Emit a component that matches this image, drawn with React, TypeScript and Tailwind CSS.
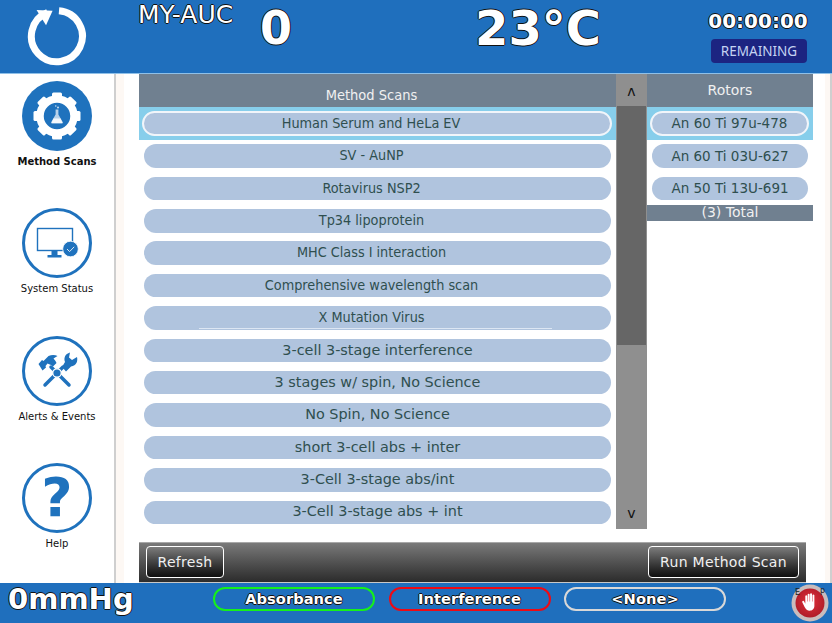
import React from 'react';

// the first rows of the list use a narrower face, and sit a little left of centre
const methods = [
  { name: 'Human Serum and HeLa EV', narrow: true },
  { name: 'SV - AuNP', narrow: true },
  { name: 'Rotavirus NSP2', narrow: true },
  { name: 'Tp34 lipoprotein', narrow: true },
  { name: 'MHC Class I interaction', narrow: true },
  { name: 'Comprehensive wavelength scan', narrow: true },
  { name: 'X Mutation Virus', narrow: true },
  { name: '3-cell 3-stage interference' },
  { name: '3 stages w/ spin, No Science' },
  { name: 'No Spin, No Science' },
  { name: 'short 3-cell abs + inter' },
  { name: '3-Cell 3-stage abs/int' },
  { name: '3-Cell 3-stage abs + int' },
];

const rotors = ['An 60 Ti 97u-478', 'An 60 Ti 03U-627', 'An 50 Ti 13U-691'];

const outline = '[text-shadow:-1px_0_0_#111,1px_0_0_#111,0_-1px_0_#111,0_1px_0_#111]';

const Row: React.FC<{ label: string; selected?: boolean; textClass: string; underline?: boolean }> = ({ label, selected, textClass, underline }) => (
  <div className={`h-[32.4px] shrink-0 px-[5px] flex items-center ${selected ? 'bg-[#87ceeb]' : ''}`}>
    <div
      className={`relative h-[23.5px] flex-1 rounded-full bg-[#b0c4de] flex items-center justify-center text-[#2f4f4f] ${textClass} ${
        selected ? '-ml-px outline-2 outline-[#f1f5fa] -outline-offset-1' : ''
      }`}
    >
      {label}
      {underline && <span className="absolute left-[55px] right-[59px] bottom-[1px] h-px bg-[#dce6f3]" />}
    </div>
  </div>
);

const GearIcon = () => (
  <svg width="70" height="70" viewBox="0 0 70 70">
    <circle cx="35" cy="35" r="35" fill="#1f72bd" />
    {[0, 45, 90, 135, 180, 225, 270, 315].map((a) => (
      <rect key={a} x="30" y="11.5" width="10" height="8" rx="1.5" fill="white" transform={`rotate(${a} 35 35)`} />
    ))}
    <circle cx="35" cy="35" r="17" fill="none" stroke="white" strokeWidth="7.5" />
    <path d="M33.6 28.500h2.800v5l4.300 7.500a0.800 0.800 0 0 1-0.700 1.200h-10a0.800 0.800 0 0 1-0.700-1.200l4.300-7.500z" fill="#b9d2ea" />
    <path d="M31.500 37.500h7l2.200 4.700h-11.400z" fill="#f4f8fc" />
    <circle cx="36" cy="26.500" r="0.900" fill="#dfeaf5" />
    <circle cx="33.800" cy="25" r="0.700" fill="#dfeaf5" />
  </svg>
);

const MonitorIcon = () => (
  <svg width="70" height="70" viewBox="0 0 70 70">
    <circle cx="35" cy="35" r="33.500" fill="white" stroke="#1f72bd" strokeWidth="3" />
    <rect x="15.500" y="20.500" width="35" height="22" fill="none" stroke="#1f72bd" strokeWidth="1.400" />
    <path d="M29.500 43h6v4h4v2.500H25.500V47h4z" fill="#1f72bd" />
    <circle cx="48.500" cy="41" r="7.800" fill="#1f72bd" stroke="white" strokeWidth="0.800" />
    <path d="M45 41l2.600 2.600 4.600-4.800" fill="none" stroke="#dce9f5" strokeWidth="1" />
  </svg>
);

const ToolsIcon = () => (
  <svg width="70" height="70" viewBox="0 0 70 70">
    <circle cx="35" cy="35" r="33.500" fill="white" stroke="#1f72bd" strokeWidth="3" />
    <path d="M29 31L47 49" stroke="#1f72bd" strokeWidth="3.500" strokeLinecap="round" />
    <path d="M41 31L23 49" stroke="#1f72bd" strokeWidth="3.500" strokeLinecap="round" />
    <path d="M16.500 28l3.500-4 1.500 1 5-5c3-1.500 6.500-1.500 9 0l-4 2.500 2 2.500 1 2-3.500 3.500-2-1.500-3.500-1.500-2 2.500 0.500 1.500-3.500 3z" fill="#1f72bd" />
    <path d="M40 31l3-5c-1.500-4 0-8 5-9.500l-1 5 3 2.500 5-3c1 4-0.500 9-6 9.500l-5 5z" fill="#1f72bd" />
    <circle cx="35" cy="37" r="4.200" fill="#1f72bd" stroke="white" strokeWidth="1.200" />
  </svg>
);

const LogoIcon = () => (
  <svg width="60" height="60" viewBox="0 0 60 60">
    <path d="M20.500 5.500A25.500 25.500 0 1 0 32 3.800" fill="none" stroke="white" strokeWidth="7" transform="translate(0 1)" />
    <path d="M9 3l16-1-5 15z" fill="white" transform="translate(0 2) rotate(6 18 8)" />
  </svg>
);

const StopIcon = () => (
  <svg width="44" height="44" viewBox="0 0 44 44" className="block">
    <defs>
      <radialGradient id="stopRed" cx="50%" cy="45%" r="55%">
        <stop offset="0%" stopColor="#e0303a" />
        <stop offset="100%" stopColor="#b01c28" />
      </radialGradient>
    </defs>
    <circle cx="21" cy="22" r="18.500" fill="#c9bcbc" />
    <circle cx="21" cy="22" r="14.500" fill="url(#stopRed)" />
    <text x="6" y="14" fontSize="8" fill="#222" fontFamily="DejaVu Sans, sans-serif">E</text>
    <text x="31" y="12" fontSize="8" fill="#222" fontFamily="DejaVu Sans, sans-serif">p</text>
    <path
      transform="translate(21 22) scale(0.78) translate(-22 -22)"
      d="M16 23v-10a1.300 1.300 0 0 1 2.400 0v7h.6v-9a1.300 1.300 0 0 1 2.500 0v9h.6v-9.500a1.300 1.300 0 0 1 2.500 0v9.500h.6v-8a1.300 1.300 0 0 1 2.400 0v14c0 4-3 6-6 6s-5-2-6.500-5l-3-6a1.300 1.300 0 0 1 2.200-1.300z"
      fill="white"
    />
  </svg>
);

const NavItem: React.FC<{ icon: React.ReactNode; label: string; bold?: boolean }> = ({ icon, label, bold }) => (
  <div className="h-[127.3px] shrink-0 flex flex-col items-center pt-[6px]">
    {icon}
    <span className={`mt-[4px] text-[10px] leading-[14px] text-[#111] ${bold ? 'font-bold' : ''}`}>{label}</span>
  </div>
);

const StatusPill: React.FC<{ label: string; border: string }> = ({ label, border }) => (
  <div className={`w-[162px] h-[24px] rounded-full border-[2.5px] ${border} flex items-center justify-center text-[14.7px] font-bold text-white ${outline}`}>
    {label}
  </div>
);

const GlossButton: React.FC<{ label: string; width: string }> = ({ label, width }) => (
  <button className={`${width} h-[32px] rounded-[4px] border border-white bg-gradient-to-b from-[#7d7d7d] to-[#0f0f0f] text-[14px] tracking-[0.3px] text-[#f0f0f0]`}>
    {label}
  </button>
);

export default function App() {
  return (
    <div className="w-[832px] h-[623px] overflow-hidden flex flex-col bg-white font-['DejaVu_Sans',sans-serif]">
      <header className="h-[74px] shrink-0 flex bg-[#1f6fbd] border-b border-[#8fc0e8] text-white">
        <div className="w-[138px] shrink-0 pl-[27px] pt-[6px]">
          <LogoIcon />
        </div>
        <div className={`w-[122px] shrink-0 text-[25px] leading-[29px] ${outline}`}>MY-AUC</div>
        <div className={`w-[215px] shrink-0 pt-[1px] text-[46px] leading-[54px] font-bold ${outline}`}>0</div>
        <div className={`w-[233px] shrink-0 pt-[1px] text-[48px] leading-[54px] font-bold ${outline}`}>23°C</div>
        <div className="w-[100px] shrink-0 flex flex-col items-center">
          <div className={`mt-[9px] text-[20px] leading-[24px] font-bold ${outline}`}>00:00:00</div>
          <div className="mt-[6px] ml-[2px] w-[96px] h-[24px] rounded-[4px] bg-[#1c2481] flex items-center justify-center text-[13.500px] text-[#c5d3f2] font-['Noto_Sans',sans-serif]">
            REMAINING
          </div>
        </div>
      </header>

      <div className="h-[509px] shrink-0 flex">
        <nav className="w-[114px] shrink-0 flex flex-col">
          <div className="h-[1px] shrink-0" />
          <NavItem icon={<GearIcon />} label="Method Scans" bold />
          <NavItem icon={<MonitorIcon />} label="System Status" />
          <NavItem icon={<ToolsIcon />} label="Alerts &amp; Events" />
          <NavItem
            icon={
              <div className="w-[70px] h-[70px] rounded-full border-[3px] border-[#1f72bd] flex items-center justify-center text-[54px] leading-none font-bold text-[#1f72bd]">
                ?
              </div>
            }
            label="Help"
          />
        </nav>

        <div className="flex-1 flex border-l-2 border-r-2 border-[#cfcfcf] bg-[#fdf8f4] pl-[8px] pr-[5px]">
          <div className="flex-1 bg-white pl-[15px] flex flex-col">
            <div className="h-[455px] shrink-0 flex">
              <section className="w-[477px] shrink-0 flex flex-col">
                <div className="h-[33.400px] shrink-0 bg-[#708090] flex items-end justify-center pb-[2px] pr-[12px] text-[14.500px] leading-[20px] text-[#f0f0f0] font-['DejaVu_Sans_Condensed','DejaVu_Sans',sans-serif]">
                  Method Scans
                </div>
                {methods.map((m, i) => (
                  <Row
                    key={m.name}
                    label={m.name}
                    selected={i === 0}
                    underline={m.name === 'X Mutation Virus'}
                    textClass={m.narrow ? "pr-[12px] text-[14.300px] font-['DejaVu_Sans_Condensed','DejaVu_Sans',sans-serif]" : 'text-[14.400px]'}
                  />
                ))}
              </section>

              <div className="w-[31px] shrink-0 flex flex-col bg-[#8f8f8f] text-[#111] text-[14px]">
                <div className="h-[32px] shrink-0 flex items-center justify-center pt-[2px]">ʌ</div>
                <div className="h-[239px] shrink-0 mx-[1px] bg-[#666666]" />
                <div className="flex-1" />
                <div className="h-[24px] shrink-0 flex items-center justify-center pb-[8px]">v</div>
              </div>

              <section className="w-[166px] shrink-0 flex flex-col">
                <div className="h-[33.400px] shrink-0 bg-[#708090] flex items-center justify-center text-[14px] text-[#f0f0f0]">Rotors</div>
                {rotors.map((r, i) => (
                  <Row key={r} label={r} selected={i === 0} textClass="text-[13.500px]" />
                ))}
                <div className="h-[16px] shrink-0 bg-[#708090] flex items-center justify-center text-[14px] text-[#f0f0f0]">(3) Total</div>
              </section>
            </div>

            <div className="mt-[13px] mr-[19px] h-[41px] shrink-0 bg-gradient-to-b from-[#7a7a7a] to-[#2c2c2c] border-t border-[#a8a8a8] border-b border-b-[#c8c8c8] flex items-start justify-between px-[7px] pt-[3px]">
              <GlossButton label="Refresh" width="w-[78px]" />
              <GlossButton label="Run Method Scan" width="w-[151px]" />
            </div>
          </div>
        </div>
      </div>

      <footer className="h-[40px] shrink-0 flex items-start bg-[#1f6fbd]">
        <div className={`w-[213px] shrink-0 pl-[8px] text-[29px] leading-[33px] font-bold text-white ${outline}`}>0mmHg</div>
        <div className="pt-[4px] flex gap-[13.500px]">
          <StatusPill label="Absorbance" border="border-[#16f01a]" />
          <StatusPill label="Interference" border="border-[#ee0a14]" />
          <StatusPill label="<None>" border="border-[#d8d8d8]" />
        </div>
        <div className="ml-auto mr-[-1px] -mt-[2px]">
          <StopIcon />
        </div>
      </footer>
    </div>
  );
}
